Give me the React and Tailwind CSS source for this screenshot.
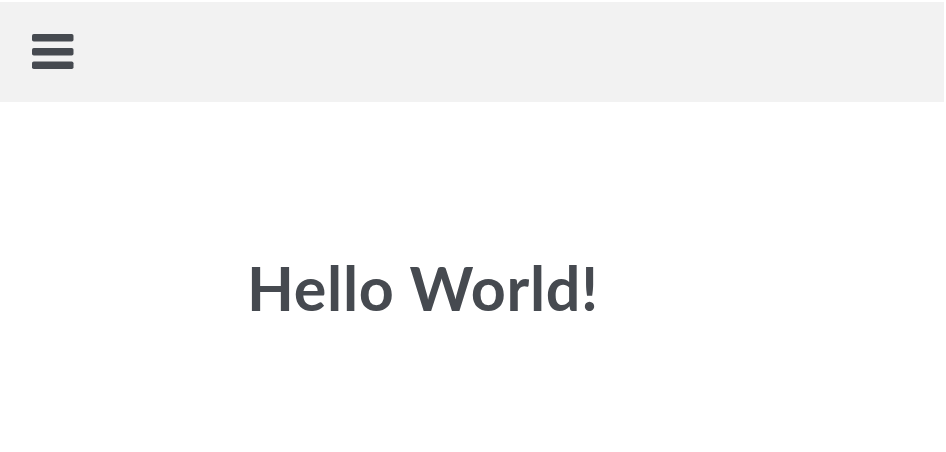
export default function App() {
  return (
    <div className="h-[452px] w-[946px] bg-white font-['Lato',sans-serif]">
      <header className="mt-[2px] flex h-[100px] w-[944px] items-center bg-[#f2f2f2] pl-[32px]">
        <button type="button" aria-label="Menu" className="block">
          <svg width="42" height="36" viewBox="0 0 42 36" className="block">
            <rect x="0" y="0" width="41.5" height="7.5" rx="1.8" fill="#464a50" />
            <rect x="0" y="14" width="41.5" height="7.5" rx="1.8" fill="#464a50" />
            <rect x="0" y="27.5" width="41.5" height="7.5" rx="1.8" fill="#464a50" />
          </svg>
        </button>
      </header>

      <main className="pl-[247px] pt-[148px]">
        <h1 className="text-[61px] font-bold leading-[76px] tracking-[0.7px] text-[#464a50]">
          Hello World!
        </h1>
      </main>
    </div>
  );
}
